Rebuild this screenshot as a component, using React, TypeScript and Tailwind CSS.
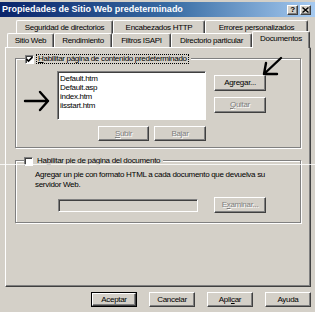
import React from "react";

const raised =
  "border border-t-white border-l-white border-r-[#404040] border-b-[#404040] shadow-[inset_-1px_-1px_0_#808080]";
const sunken =
  "border border-t-[#808080] border-l-[#808080] border-r-white border-b-white shadow-[inset_1px_1px_0_#404040]";
const disabledText = "text-[#808080] [text-shadow:1px_1px_0_#ffffff]";

function Btn({
  label,
  w,
  h = 16,
  disabled = false,
}: {
  label: React.ReactNode;
  w: string;
  h?: number;
  disabled?: boolean;
}) {
  return (
    <div
      className={`${raised} ${w} ${h === 16 ? "h-[16px]" : "h-[15px]"} flex items-center justify-center bg-[#d4d0c8] ${
        disabled ? disabledText : "text-black"
      }`}
    >
      {label}
    </div>
  );
}

function Tab({ label, w, selected = false }: { label: string; w: string; selected?: boolean }) {
  return (
    <div
      className={`${w} ${
        selected ? "h-[17px] -mb-px z-10 pb-[3px]" : "h-[14px]"
      } flex items-center justify-center bg-[#d4d0c8] border-l border-t border-r border-l-white border-t-white border-r-[#404040] shadow-[inset_-1px_0_0_#808080] rounded-t-[2px] whitespace-nowrap`}
    >
      {label}
    </div>
  );
}

function Check({ checked }: { checked: boolean }) {
  return (
    <div className={`w-[9px] h-[9px] bg-white ${sunken} flex items-center justify-center`}>
      {checked && (
        <svg width="7" height="7" viewBox="0 0 7 7">
          <path d="M0.5 3 L2.5 5 L6.5 1" stroke="black" strokeWidth="1.6" fill="none" />
        </svg>
      )}
    </div>
  );
}

export default function App() {
  return (
    <div className="relative w-[315px] h-[312px] overflow-hidden bg-[#d4d0c8] text-[8px] tracking-[-0.3px] leading-none text-black font-['Liberation_Sans',Arial,sans-serif]">
      {/* Title bar */}
      <div className="mt-[2px] h-[15px] flex items-center justify-between pl-[2px] pr-[4px] bg-[linear-gradient(to_right,#0a246a,#3a6ea5_55%,#a6caf0)]">
        <span className="text-white font-bold text-[9px] tracking-normal whitespace-nowrap">Propiedades de Sitio Web predeterminado</span>
        <div className="flex gap-[2px]">
          <div className={`${raised} w-[11px] h-[10px] bg-[#d4d0c8] flex items-center justify-center font-bold text-[8px]`}>?</div>
          <div className={`${raised} w-[11px] h-[10px] bg-[#d4d0c8] flex items-center justify-center`}>
            <svg width="7" height="6" viewBox="0 0 7 6">
              <path d="M0.5 0.5 L6.5 5.5 M6.5 0.5 L0.5 5.5" stroke="black" strokeWidth="1.4" />
            </svg>
          </div>
        </div>
      </div>

      {/* Tabs row 1 */}
      <div className="mt-[3px] ml-[16px] flex h-[13px] items-stretch">
        <Tab label="Seguridad de directorios" w="w-[97px]" />
        <Tab label="Encabezados HTTP" w="w-[92px]" />
        <Tab label="Errores personalizados" w="w-[103px]" />
      </div>
      {/* Tabs row 2 */}
      <div className="ml-[7px] flex items-end h-[16px] -mt-[2px] relative z-10">
        <Tab label="Sitio Web" w="w-[47px]" />
        <Tab label="Rendimiento" w="w-[58px]" />
        <Tab label="Filtros ISAPI" w="w-[59px]" />
        <Tab label="Directorio particular" w="w-[81px]" />
        <Tab label="Documentos" w="w-[58px]" selected />
      </div>

      {/* Panel */}
      <div className="ml-[5px] w-[306px] h-[240px] border border-t-white border-l-white border-r-[#404040] border-b-[#404040] shadow-[inset_-1px_-1px_0_#808080] pt-[10px] pl-[9px]">
        {/* Group 1 */}
        <div className="w-[286px] h-[90px] border border-[#808080] shadow-[inset_1px_1px_0_#fff,1px_1px_0_#fff] flex flex-col">
          <div className="-mt-[5px] ml-[9px] h-[10px] w-fit flex items-center bg-[#d4d0c8] pr-[2px]">
            <Check checked />
            <div className="ml-[2px] h-[10px] px-[1px] flex items-center border border-dotted border-black whitespace-nowrap">
              <span>
                <span className="underline">H</span>abilitar página de contenido predeterminado
              </span>
            </div>
          </div>
          <div className="mt-[7px] flex">
            <div className={`ml-[41px] w-[149px] h-[49px] bg-white ${sunken} pt-[2px] pl-[2px] leading-[9px]`}>
              <div>Default.htm</div>
              <div>Default.asp</div>
              <div>index.htm</div>
              <div>iisstart.htm</div>
            </div>
            <div className="ml-[8px] mt-[4px] flex flex-col gap-[6px]">
              <Btn label={<span>Agregar...</span>} w="w-[52px]" />
              <Btn label={<span><span className="underline">Q</span>uitar</span>} w="w-[52px]" disabled />
            </div>
          </div>
          <div className="mt-[6px] ml-[82px] flex gap-[5px]">
            <Btn label={<span><span className="underline">S</span>ubir</span>} w="w-[51px]" h={15} disabled />
            <Btn label={<span>Ba<span className="underline">j</span>ar</span>} w="w-[52px]" h={15} disabled />
          </div>
        </div>

        {/* Group 2 */}
        <div className="mt-[12px] w-[286px] h-[63px] border border-[#808080] shadow-[inset_1px_1px_0_#fff,1px_1px_0_#fff] flex flex-col">
          <div className="-mt-[5px] ml-[8px] h-[10px] w-fit flex items-center bg-[#d4d0c8] pr-[2px]">
            <Check checked={false} />
            <div className="ml-[3px] px-[1px] whitespace-nowrap">
              Ha<span className="underline">b</span>ilitar pie de página del documento
            </div>
          </div>
          <div className="mt-[4px] ml-[19px] w-[240px] leading-[10px]">
            Agregar un pie con formato HTML a cada documento que devuelva su servidor Web.
          </div>
          <div className="mt-[7px] flex items-center">
            <div className={`ml-[42px] w-[140px] h-[13px] bg-[#d4d0c8] ${sunken}`} />
            <div className="ml-[16px]">
              <Btn label={<span>E<span className="underline">x</span>aminar...</span>} w="w-[52px]" disabled />
            </div>
          </div>
        </div>
      </div>

      {/* Bottom buttons */}
      <div className="mt-[5px] ml-[91px] flex gap-[12px]">
        <div className="w-[46px] h-[15px] border border-black">
          <div className={`${raised} w-full h-full flex items-center justify-center`}>Aceptar</div>
        </div>
        <Btn label="Cancelar" w="w-[46px]" h={15} />
        <Btn label={<span>Apli<span className="underline">c</span>ar</span>} w="w-[46px]" h={15} />
        <Btn label="Ayuda" w="w-[46px]" h={15} />
      </div>

      {/* scan artifact line */}
      <div className="absolute left-0 top-[164px] w-[315px] h-[1px] bg-white/80" />

      {/* Hand-drawn arrows */}
      <svg className="absolute left-0 top-0 pointer-events-none" width="315" height="312" viewBox="0 0 315 312">
        <g stroke="black" strokeWidth="2.4" strokeLinecap="round" fill="none">
          <path d="M25 101 L48 101 M48 101 L40 92 M48 101 L40 110" />
          <path d="M281 58 L264 74 M264 74 L266 63 M264 74 L277 74" />
        </g>
      </svg>
    </div>
  );
}
